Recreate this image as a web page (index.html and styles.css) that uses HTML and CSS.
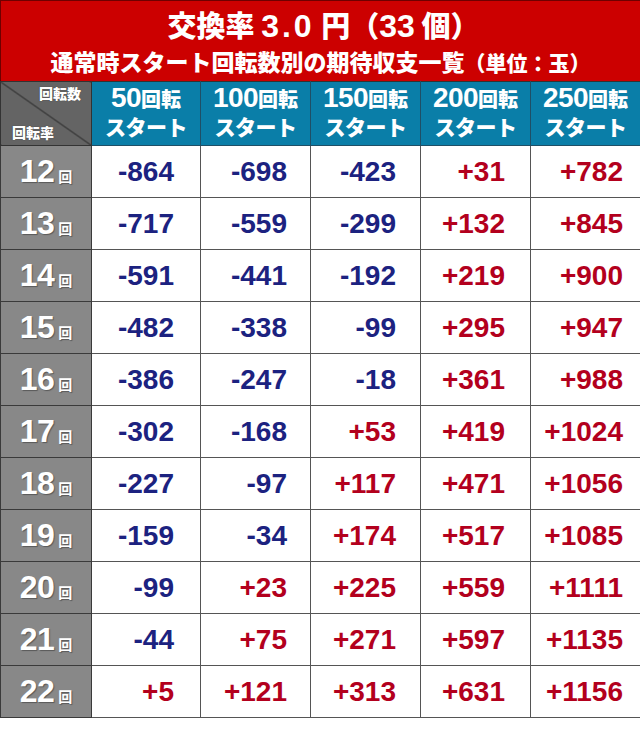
FILE: index.html
```
<!DOCTYPE html>
<html lang="ja">
<head>
<meta charset="utf-8">
<title>交換率 3.0円（33個）</title>
<link rel="stylesheet" href="styles.css">
</head>
<body>
<div class="banner">
  <div class="title">交換率 <span class="tnum">3.0</span> 円（<span class="tnum2">33</span> 個）</div>
  <div class="subtitle">通常時スタート回転数別の期待収支一覧<span class="unit">（単位：玉）</span></div>
</div>
<table class="grid">
  <colgroup>
    <col class="c0"><col class="c1"><col class="c2"><col class="c2"><col class="c2"><col class="c2">
  </colgroup>
  <thead>
    <tr>
      <th class="corner"><div class="corner-in"><span class="c-top">回転数</span><span class="c-bot">回転率</span></div></th>
      <th class="head"><span class="hn">50</span><span class="hk">回転</span><br><span class="hs">スタート</span></th>
      <th class="head"><span class="hn">100</span><span class="hk">回転</span><br><span class="hs">スタート</span></th>
      <th class="head"><span class="hn">150</span><span class="hk">回転</span><br><span class="hs">スタート</span></th>
      <th class="head"><span class="hn">200</span><span class="hk">回転</span><br><span class="hs">スタート</span></th>
      <th class="head"><span class="hn">250</span><span class="hk">回転</span><br><span class="hs">スタート</span></th>
    </tr>
  </thead>
  <tbody>
    <tr><th class="rate"><span class="rn">12</span><span class="rk">回</span></th><td class="neg">-864</td><td class="neg">-698</td><td class="neg">-423</td><td class="pos">+31</td><td class="pos">+782</td></tr>
    <tr><th class="rate"><span class="rn">13</span><span class="rk">回</span></th><td class="neg">-717</td><td class="neg">-559</td><td class="neg">-299</td><td class="pos">+132</td><td class="pos">+845</td></tr>
    <tr><th class="rate"><span class="rn">14</span><span class="rk">回</span></th><td class="neg">-591</td><td class="neg">-441</td><td class="neg">-192</td><td class="pos">+219</td><td class="pos">+900</td></tr>
    <tr><th class="rate"><span class="rn">15</span><span class="rk">回</span></th><td class="neg">-482</td><td class="neg">-338</td><td class="neg">-99</td><td class="pos">+295</td><td class="pos">+947</td></tr>
    <tr><th class="rate"><span class="rn">16</span><span class="rk">回</span></th><td class="neg">-386</td><td class="neg">-247</td><td class="neg">-18</td><td class="pos">+361</td><td class="pos">+988</td></tr>
    <tr><th class="rate"><span class="rn">17</span><span class="rk">回</span></th><td class="neg">-302</td><td class="neg">-168</td><td class="pos">+53</td><td class="pos">+419</td><td class="pos">+1024</td></tr>
    <tr><th class="rate"><span class="rn">18</span><span class="rk">回</span></th><td class="neg">-227</td><td class="neg">-97</td><td class="pos">+117</td><td class="pos">+471</td><td class="pos">+1056</td></tr>
    <tr><th class="rate"><span class="rn">19</span><span class="rk">回</span></th><td class="neg">-159</td><td class="neg">-34</td><td class="pos">+174</td><td class="pos">+517</td><td class="pos">+1085</td></tr>
    <tr><th class="rate"><span class="rn">20</span><span class="rk">回</span></th><td class="neg">-99</td><td class="pos">+23</td><td class="pos">+225</td><td class="pos">+559</td><td class="pos">+1111</td></tr>
    <tr><th class="rate"><span class="rn">21</span><span class="rk">回</span></th><td class="neg">-44</td><td class="pos">+75</td><td class="pos">+271</td><td class="pos">+597</td><td class="pos">+1135</td></tr>
    <tr><th class="rate"><span class="rn">22</span><span class="rk">回</span></th><td class="pos">+5</td><td class="pos">+121</td><td class="pos">+313</td><td class="pos">+631</td><td class="pos">+1156</td></tr>
  </tbody>
</table>
</body>
</html>
```
FILE: styles.css
```
html, body {
  margin: 0;
  padding: 0;
  background: #ffffff;
}
body {
  width: 640px;
  font-family: "Liberation Sans", "Noto Sans CJK JP", sans-serif;
  color: #ffffff;
}
.banner {
  box-sizing: border-box;
  height: 81px;
  background: #cc0000;
  border-top: 1px solid #6e0000;
  border-left: 1px solid #6e0000;
  text-align: center;
  padding-top: 7px;
  font-weight: bold;
}
.title {
  font-family: "Noto Sans CJK JP", sans-serif;
  font-weight: 900;
  font-size: 29px;
  line-height: 32px;
  padding-left: 6px;
}
.tnum, .tnum2 {
  font-family: "Liberation Sans", sans-serif;
  font-weight: bold;
  font-size: 32px;
}
.tnum {
  letter-spacing: 3px;
}
.subtitle {
  font-family: "Noto Sans CJK JP", sans-serif;
  font-weight: 900;
  font-size: 23px;
  line-height: 26px;
  margin-top: 6px;
}
.unit {
  font-size: 21px;
}
.grid {
  width: 640px;
  border-collapse: collapse;
  table-layout: fixed;
}
.c0 { width: 91px; }
.c1 { width: 109px; }
.c2 { width: 110px; }
.grid thead tr {
  height: 64px;
}
.grid tbody tr {
  height: 52px;
}
.grid th, .grid td {
  padding: 0;
}
.corner {
  background: linear-gradient(to top right, #646464 calc(50% - 0.8px), #1e1e1e 50%, #646464 calc(50% + 0.8px));
  border: 1px solid #333333;
  vertical-align: top;
}
.corner-in {
  height: 62px;
  display: flex;
  flex-direction: column;
  justify-content: space-between;
  font-family: "Noto Sans CJK JP", sans-serif;
  font-size: 14px;
  line-height: 18px;
  font-weight: 900;
  padding: 2px 0 3px;
  box-sizing: border-box;
  text-shadow: 0 0 1px rgba(0,0,0,0.5);
}
.c-top {
  align-self: flex-end;
  padding-right: 10px;
}
.c-bot {
  align-self: flex-start;
  padding-left: 11px;
}
.head {
  background: #0a7ea8;
  border: 1px solid #1f4f66;
  border-top: 1px solid #333333;
  text-align: center;
  vertical-align: middle;
  font-weight: bold;
  line-height: 24px;
  padding-bottom: 2px;
}
.hn {
  font-family: "Liberation Sans", sans-serif;
  font-size: 28px;
  letter-spacing: -0.5px;
}
.hk {
  font-family: "Noto Sans CJK JP", sans-serif;
  font-weight: 900;
  font-size: 20px;
}
.hs {
  font-family: "Noto Sans CJK JP", sans-serif;
  font-weight: 900;
  font-size: 21px;
  letter-spacing: -0.5px;
}
.rate {
  background: #888888;
  border: 1px solid #3a3a3a;
  text-align: center;
  vertical-align: middle;
  font-weight: bold;
  text-shadow: 1px 1px 1px rgba(0,0,0,0.35);
  padding-top: 4px;
}
.rn {
  font-family: "Liberation Sans", sans-serif;
  font-size: 32px;
  letter-spacing: -0.5px;
}
.rk {
  font-family: "Noto Sans CJK JP", sans-serif;
  font-size: 14px;
  margin-left: 4px;
}
.grid td {
  border: 1px solid #555555;
  text-align: right;
  vertical-align: middle;
  font-family: "Liberation Sans", sans-serif;
  font-size: 28px;
  font-weight: bold;
  line-height: 32px;
}
.grid td:nth-child(2) { padding-right: 26px; }
.grid td:nth-child(3) { padding-right: 23px; }
.grid td:nth-child(4) { padding-right: 24px; }
.grid td:nth-child(5) { padding-right: 25px; }
.grid td:nth-child(6) { padding-right: 17px; }
.neg { color: #1c2280; }
.pos { color: #b3001d; }
```
